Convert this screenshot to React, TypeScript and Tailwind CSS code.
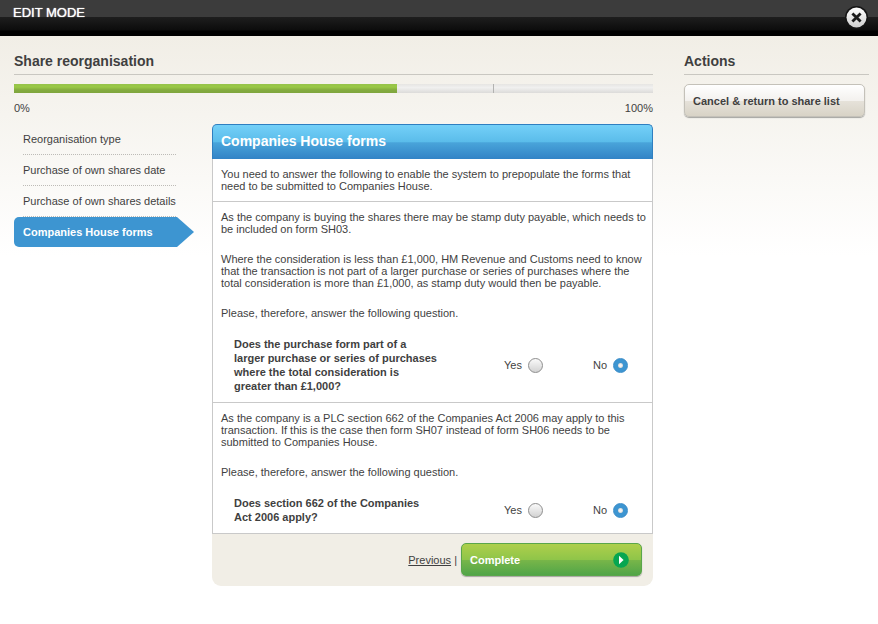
import { clsx } from 'clsx'

const STEPS = [
  'Reorganisation type',
  'Purchase of own shares date',
  'Purchase of own shares details',
  'Companies House forms',
]
const CURRENT_STEP = 3
const PROGRESS = 60

const Heading: React.FC<{ children: string }> = ({ children }) => (
  <h2 className="h-[39px] pt-4 border-b border-[#c9c7c1] text-[14px] leading-[18px] font-bold">
    {children}
  </h2>
)

const TopBar: React.FC = () => (
  <header className="h-9 flex justify-between pl-[13px] pr-[10px] bg-[linear-gradient(#3c3c3c_0,#3c3c3c_17px,#1e1e1e_17px,#0c0c0c_30px,#000_31px)]">
    <h1 className="pt-[5px] text-[13px] leading-4 text-white [text-shadow:0_0_1px_#fff]">EDIT MODE</h1>
    <button type="button" aria-label="Close" className="mt-[6px] size-[23px]">
      <svg viewBox="0 0 23 23" className="size-full">
        <defs>
          <linearGradient id="close-face" x1="0" y1="0" x2="0" y2="1">
            <stop offset="0" stopColor="#ffffff" />
            <stop offset="1" stopColor="#cfcfcf" />
          </linearGradient>
        </defs>
        <circle cx="11.5" cy="11.5" r="11.5" fill="#151515" />
        <circle cx="11.5" cy="11.5" r="10" fill="url(#close-face)" />
        <path d="M7.4 7.4l8.2 8.2M15.6 7.4l-8.2 8.2" stroke="#1b1b1b" strokeWidth="2.8" />
      </svg>
    </button>
  </header>
)

const ProgressBar: React.FC = () => (
  <div className="mt-[9px]">
    <div
      role="progressbar"
      aria-label="Progress"
      aria-valuenow={PROGRESS}
      className="relative h-[9px] bg-[linear-gradient(#e6e5e3,#f0f0ef_40%,#dcdbd9)]"
    >
      <span className="absolute inset-y-0 left-3/4 w-px bg-[#b2b2b0]" />
      <div
        className="relative h-full bg-[linear-gradient(#96c34a_0,#9ac946_3px,#83ab3f_6px,#7fa53d_9px)]"
        style={{ width: `${PROGRESS}%` }}
      />
    </div>
    <div className="mt-[9px] flex justify-between">
      <span>0%</span>
      <span>100%</span>
    </div>
  </div>
)

const StepList: React.FC = () => (
  <nav className="w-[180px] shrink-0">
    <ol>
      {STEPS.map((step, i) => {
        const current = i === CURRENT_STEP
        return (
          <li key={step}>
            <a
              href="#"
              aria-current={current ? 'step' : undefined}
              className={clsx(
                'block leading-[30px]',
                current
                  ? 'pl-[9px] rounded-l-[5px] bg-[#3d95d1] font-bold text-white [clip-path:polygon(0_0,163px_0,100%_50%,163px_100%,0_100%)]'
                  : 'ml-[9px] mr-[18px] border-b border-dotted border-[#bdbbb7]'
              )}
            >
              {step}
            </a>
          </li>
        )
      })}
    </ol>
  </nav>
)

const Radio: React.FC<{ name: string; label: string; defaultChecked?: boolean }> = ({ name, label, defaultChecked }) => (
  <label className="flex items-center gap-[6px]">
    {label}
    <input
      type="radio"
      name={name}
      defaultChecked={defaultChecked}
      className="appearance-none size-[15px] rounded-full border border-[#8e8e8e] bg-[linear-gradient(#fafafa,#d2d2d2)] checked:border-[#3a8cc8] checked:bg-[radial-gradient(circle,#f4f4f4_1px,#dcdcdc_2px,#3d95d1_3px)]"
    />
  </label>
)

const Question: React.FC<{ name: string; children: string }> = ({ name, children }) => (
  <fieldset className="flex items-center pl-[13px] pr-5">
    <legend className="float-left w-[205px] font-bold leading-[14px]">{children}</legend>
    <div className="flex-1 flex justify-end gap-[50px]">
      <Radio name={name} label="Yes" />
      <Radio name={name} label="No" defaultChecked />
    </div>
  </fieldset>
)

const Section: React.FC<{ children: React.ReactNode }> = ({ children }) => (
  <section className="flex flex-col gap-[18px] py-[9px] pl-2 pr-1 border-x border-b border-[#c9c9c9] bg-white">
    {children}
  </section>
)

const FormPanel: React.FC = () => (
  <form className="flex-1 rounded-[9px] bg-[#f1eee6]" onSubmit={(e) => e.preventDefault()}>
    <h2 className="h-[35px] px-2 rounded-t-[5px] border border-b-0 border-[#2f7fc0] bg-[linear-gradient(#74d0f8_0,#5abcea_50%,#49a4da_52%,#3283c6_100%)] text-[14px] leading-8 font-bold text-white">
      Companies House forms
    </h2>

    <Section>
      <p>
        You need to answer the following to enable the system to prepopulate the forms that need to be submitted to
        Companies House.
      </p>
    </Section>

    <Section>
      <p>
        As the company is buying the shares there may be stamp duty payable, which needs to be included on form SH03.
      </p>
      <p>
        Where the consideration is less than £1,000, HM Revenue and Customs need to know that the transaction is not
        part of a larger purchase or series of purchases where the total consideration is more than £1,000, as stamp
        duty would then be payable.
      </p>
      <p>Please, therefore, answer the following question.</p>
      <Question name="larger-purchase">
        Does the purchase form part of a larger purchase or series of purchases where the total consideration is greater than £1,000?
      </Question>
    </Section>

    <Section>
      <p>
        As the company is a PLC section 662 of the Companies Act 2006 may apply to this transaction. If this is the
        case then form SH07 instead of form SH06 needs to be submitted to Companies House.
      </p>
      <p>Please, therefore, answer the following question.</p>
      <Question name="section-662">Does section 662 of the Companies Act 2006 apply?</Question>
    </Section>

    <div className="flex items-center justify-end gap-1 pt-[9px] pb-[10px] pr-[11px]">
      <span>
        <a href="#" className="underline underline-offset-1">Previous</a> |
      </span>
      <button
        type="submit"
        className="flex items-center justify-between w-[181px] h-[33px] pl-2 pr-3 rounded-[5px] border border-[#5aa64a] bg-[linear-gradient(#aecf4b_0,#8fc549_50%,#79b649_51%,#51a548_100%)] font-bold text-white shadow-[0_1px_1px_#a5a5a0]"
      >
        Complete
        <svg viewBox="0 0 16 16" className="size-4">
          <circle cx="8" cy="8" r="7.8" fill="#06a651" />
          <path d="M6 3.8v8.4L10.6 8z" fill="#fff" />
        </svg>
      </button>
    </div>
  </form>
)

const App: React.FC = () => (
  <div className="min-h-screen bg-white font-['Liberation_Sans',Arial,sans-serif] text-[11px] leading-3 text-[#3f3f3f]">
    <TopBar />
    <div className="flex gap-[31px] pl-[14px] pr-[9px] pb-9 bg-[linear-gradient(#f1eee6,#fff_220px)]">
      <main className="flex-1">
        <Heading>Share reorganisation</Heading>
        <ProgressBar />
        <div className="mt-[10px] flex items-start gap-[18px]">
          <StepList />
          <FormPanel />
        </div>
      </main>

      <aside className="w-[185px]">
        <Heading>Actions</Heading>
        <button
          type="button"
          className="mt-[9px] w-[181px] h-[33px] pl-2 rounded-[5px] border border-[#c4c1b9] bg-[linear-gradient(#fff_0,#f3f1ee_50%,#e6e2da_51%,#d8d3c6_100%)] text-left font-bold shadow-[0_1px_1px_#a5a5a0]"
        >
          Cancel &amp; return to share list
        </button>
      </aside>
    </div>
  </div>
)

export default App
